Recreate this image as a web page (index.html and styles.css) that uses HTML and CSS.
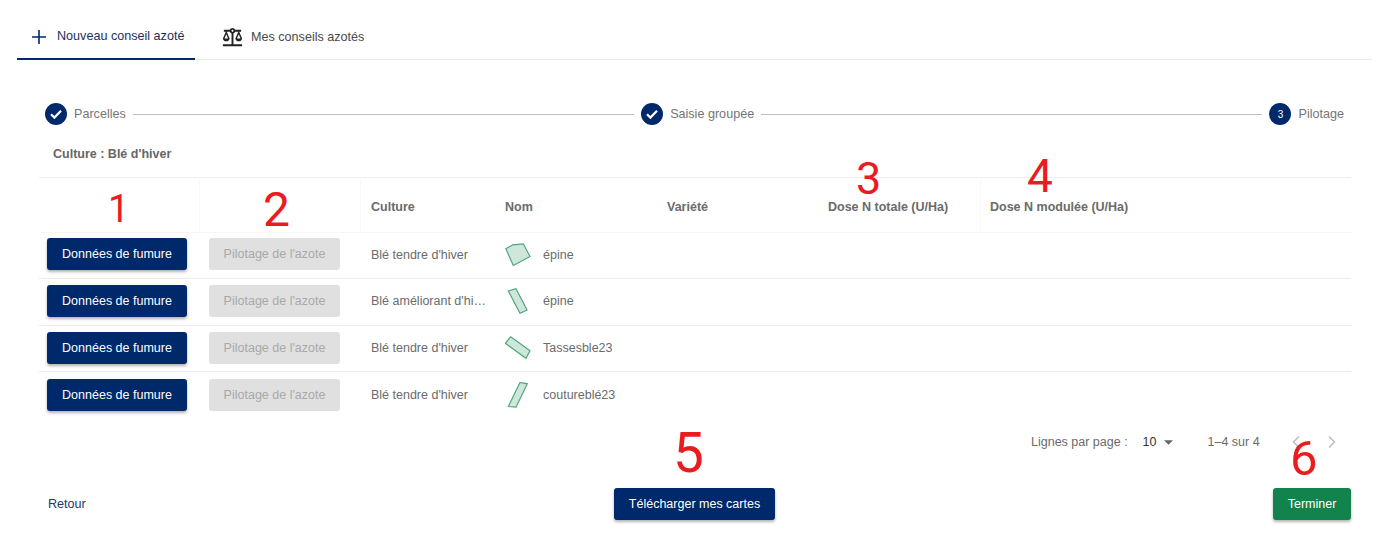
FILE: index.html
```html
<!DOCTYPE html>
<html lang="fr">
<head>
<meta charset="utf-8">
<title>Conseil azoté</title>
<link rel="stylesheet" href="styles.css">
</head>
<body>
<div class="page">
  <nav class="tabs">
    <a class="tab active">
      <svg class="tab-plus" viewBox="0 0 14 14"><path d="M7 0v14M0 7h14"/></svg>
      <span>Nouveau conseil azoté</span>
    </a>
    <a class="tab">
      <svg class="tab-scale" viewBox="0 0 24 24"><path d="M13 7.83c.85-.3 1.53-.98 1.83-1.83H18l-3 7c0 1.66 1.57 3 3.5 3s3.5-1.34 3.5-3l-3-7h2V4h-6.17c-.41-1.17-1.52-2-2.83-2s-2.42.83-2.83 2H3v2h2l-3 7c0 1.66 1.57 3 3.5 3S9 14.66 9 13L6 6h3.17c.3.85.98 1.53 1.83 1.83V19H2v2h20v-2h-9V7.83zM20.37 13h-3.74l1.87-4.36L20.37 13zm-13 0H3.63L5.5 8.64 7.37 13zM12 6c-.55 0-1-.45-1-1s.45-1 1-1 1 .45 1 1-.45 1-1 1z"/></svg>
      <span>Mes conseils azotés</span>
    </a>
  </nav>

  <div class="stepper">
    <div class="step">
      <svg class="step-icon" viewBox="0 0 22 22"><circle cx="11" cy="11" r="11"/><path class="check" d="M6 11.3l3.4 3.3 6.6-6.8"/></svg>
      <span>Parcelles</span>
    </div>
    <div class="connector"></div>
    <div class="step">
      <svg class="step-icon" viewBox="0 0 22 22"><circle cx="11" cy="11" r="11"/><path class="check" d="M6 11.3l3.4 3.3 6.6-6.8"/></svg>
      <span>Saisie groupée</span>
    </div>
    <div class="connector"></div>
    <div class="step">
      <span class="step-num">3</span>
      <span>Pilotage</span>
    </div>
  </div>

  <p class="culture-title">Culture : Blé d'hiver</p>

  <div class="table">
    <div class="row head">
      <div class="cell sep"></div>
      <div class="cell sep"></div>
      <div class="cell">Culture</div>
      <div class="cell">Nom</div>
      <div class="cell">Variété</div>
      <div class="cell sep">Dose N totale (U/Ha)</div>
      <div class="cell">Dose N modulée (U/Ha)</div>
    </div>

    <div class="row">
      <div class="cell btn-cell"><button class="btn primary">Données de fumure</button></div>
      <div class="cell btn-cell"><button class="btn disabled">Pilotage de l'azote</button></div>
      <div class="cell"><span class="clip">Blé tendre d'hiver</span></div>
      <div class="cell name">
        <svg class="parcel" viewBox="0 0 26 26"><polygon points="0.8,6.8 7.7,2.8 18.3,1.8 25,14.5 8.3,23.5"/></svg>
        <span>épine</span>
      </div>
      <div class="cell"></div><div class="cell"></div><div class="cell"></div>
    </div>

    <div class="row">
      <div class="cell btn-cell"><button class="btn primary">Données de fumure</button></div>
      <div class="cell btn-cell"><button class="btn disabled">Pilotage de l'azote</button></div>
      <div class="cell"><span class="clip">Blé améliorant d'hiver</span></div>
      <div class="cell name">
        <svg class="parcel" viewBox="0 0 26 26"><polygon points="3.3,3 11,0.7 22,22 15,25.3"/></svg>
        <span>épine</span>
      </div>
      <div class="cell"></div><div class="cell"></div><div class="cell"></div>
    </div>

    <div class="row">
      <div class="cell btn-cell"><button class="btn primary">Données de fumure</button></div>
      <div class="cell btn-cell"><button class="btn disabled">Pilotage de l'azote</button></div>
      <div class="cell"><span class="clip">Blé tendre d'hiver</span></div>
      <div class="cell name">
        <svg class="parcel" viewBox="0 0 26 26"><polygon points="0.3,8.3 5.7,1.7 25,15.7 21,23.3"/></svg>
        <span>Tassesble23</span>
      </div>
      <div class="cell"></div><div class="cell"></div><div class="cell"></div>
    </div>

    <div class="row last">
      <div class="cell btn-cell"><button class="btn primary">Données de fumure</button></div>
      <div class="cell btn-cell"><button class="btn disabled">Pilotage de l'azote</button></div>
      <div class="cell"><span class="clip">Blé tendre d'hiver</span></div>
      <div class="cell name">
        <svg class="parcel" viewBox="0 0 26 26"><polygon points="3.3,24.5 15,0.5 22.3,1.8 11,25.2"/></svg>
        <span>coutureblé23</span>
      </div>
      <div class="cell"></div><div class="cell"></div><div class="cell"></div>
    </div>
  </div>

  <div class="pagination">
    <span class="per-page">Lignes par page :</span>
    <span class="select">10<svg class="caret" viewBox="0 0 10 5"><path d="M0 0h10L5 5z"/></svg></span>
    <span class="range">1–4 sur 4</span>
    <svg class="chev" viewBox="0 0 10 14"><path d="M8 1.5L2.5 7 8 12.5"/></svg>
    <svg class="chev" viewBox="0 0 10 14"><path d="M2 1.5L7.5 7 2 12.5"/></svg>
  </div>

  <div class="actions">
    <a class="back">Retour</a>
    <button class="btn primary download">Télécharger mes cartes</button>
    <button class="btn success">Terminer</button>
  </div>

  <span class="note n1">1</span>
  <span class="note n2">2</span>
  <span class="note n3">3</span>
  <span class="note n4">4</span>
  <span class="note n5">5</span>
  <span class="note n6">6</span>
</div>
</body>
</html>
```

FILE: styles.css
```css
* { box-sizing: border-box; }

html, body {
  margin: 0;
  background: #fff;
}

body {
  font-family: "Liberation Sans", Arial, sans-serif;
  font-size: 12.5px;
  color: #666;
}

.page {
  position: relative;
  width: 1382px;
  height: 559px;
  overflow: hidden;
  padding-top: 14px;
}

/* Tabs */
.tabs {
  display: flex;
  height: 46px;
  margin: 0 10px 0 17px;
  border-bottom: 1px solid #e9e9e9;
}

.tab {
  display: flex;
  align-items: center;
  height: 46px;
  font-size: 12.6px;
  color: #444;
}

.tab.active {
  width: 178px;
  padding: 0 0 1px 15px;
  gap: 11px;
  color: #1c2f5c;
  border-bottom: 2px solid #00296b;
}

.tab + .tab {
  padding: 0 0 1px 26px;
  gap: 7px;
  color: #4a4a4a;
}

.tab-plus {
  width: 14px;
  height: 14px;
  margin-top: 2px;
  fill: none;
  stroke: #00296b;
  stroke-width: 1.6;
}

.tab-scale {
  width: 23px;
  height: 23px;
  margin-top: 2px;
  fill: #222;
}

/* Stepper */
.stepper {
  display: flex;
  align-items: center;
  height: 24px;
  margin: 42px 38px 0 45px;
}

.step {
  display: flex;
  align-items: center;
  gap: 7px;
  font-size: 12.6px;
  color: #757575;
}

.step-icon {
  width: 22px;
  height: 22px;
  flex: none;
}

.step-icon circle { fill: #00296b; }

.check {
  fill: none;
  stroke: #fff;
  stroke-width: 2.2;
}

.step-num {
  display: flex;
  align-items: center;
  justify-content: center;
  width: 22px;
  height: 22px;
  border-radius: 50%;
  background: #00296b;
  color: #fff;
  font-size: 10px;
}

.connector {
  flex: 1;
  height: 1px;
  margin: 0 7px;
  background: #bdbdbd;
}

.culture-title {
  margin: 21px 0 0 53px;
  height: 15px;
  line-height: 15px;
  font-size: 12.5px;
  font-weight: 700;
  color: #666;
}

/* Table */
.table {
  margin: 15px 31px 0 39px;
  border-top: 1px solid #efefef;
}

.row {
  display: grid;
  grid-template-columns: 160px 161px 135px 162px 161px 162px 1fr;
  height: 46.6px;
  padding-bottom: 1px;
  border-bottom: 1px solid #ececec;
}

.row.last { border-bottom: 0; }

.row.head {
  height: 54.6px;
  padding-bottom: 0;
  border-bottom: 1px solid #f6f6f6;
}

.cell {
  display: flex;
  align-items: center;
  min-width: 0;
  padding: 0 10px;
  font-size: 12.5px;
  color: #6b6b6b;
}

.row > .cell:nth-child(3) {
  padding-left: 11px;
  padding-right: 8px;
}

.row.head > .cell {
  font-weight: 700;
  padding-top: 4px;
}

.head .sep { box-shadow: 1px 0 0 #f8f8f8; }

.btn-cell { padding: 0 0 1px 8px; }
.btn-cell + .btn-cell { padding-left: 10px; }

.clip {
  display: block;
  width: 100%;
  overflow: hidden;
  white-space: nowrap;
  text-overflow: ellipsis;
}

.name { gap: 12px; }

.parcel {
  width: 26px;
  height: 26px;
  flex: none;
  fill: #cfe6db;
  stroke: #4fa77c;
  stroke-width: 1.2;
}

/* Buttons */
.btn {
  display: flex;
  align-items: center;
  justify-content: center;
  height: 32px;
  border: 0;
  border-radius: 3px;
  padding: 0;
  font-family: inherit;
  font-size: 12.5px;
  white-space: nowrap;
}

.btn-cell .btn { width: 140px; }
.btn-cell + .btn-cell .btn { width: 131px; }

.primary {
  background: #00296b;
  color: #fff;
  box-shadow: 0 2px 3px rgba(0, 0, 0, .3);
}

.disabled {
  background: #e0e0e0;
  color: #a9a9a9;
}

.success {
  width: 78px;
  background: #12834c;
  color: #fff;
  box-shadow: 0 2px 3px rgba(0, 0, 0, .3);
}

/* Pagination */
.pagination {
  display: flex;
  align-items: center;
  height: 20px;
  margin: 13.4px 0 0 1031px;
  font-size: 12.5px;
  color: #6b6b6b;
}

.select {
  display: flex;
  align-items: center;
  gap: 7px;
  margin-left: 15px;
  color: #333;
}

.caret {
  width: 9px;
  height: 5px;
  fill: #666;
}

.range { margin-left: 35px; }

.chev {
  width: 10px;
  height: 14px;
  margin-left: 31px;
  fill: none;
  stroke: #bdbdbd;
  stroke-width: 1.5;
}

.chev + .chev { margin-left: 26.5px; }

/* Actions */
.actions {
  display: grid;
  grid-template-columns: 566px 161px 1fr;
  align-items: center;
  margin: 36px 31px 0 48px;
}

.back {
  font-size: 12.6px;
  color: #1f3a68;
}

.success { justify-self: end; }

/* Annotations */
.note {
  position: absolute;
  font-family: "Roboto", "Liberation Sans", sans-serif;
  line-height: .85;
  font-weight: 400;
  color: #ea1c1f;
}

.n1 { left: 108px; top: 193px; font-size: 38px; }
.n2 { left: 263px; top: 190px; font-size: 48px; }
.n3 { left: 856px; top: 160px; font-size: 45px; }
.n4 { left: 1027px; top: 157px; font-size: 46px; }
.n5 { left: 673px; top: 430px; font-size: 55px; }
.n6 { left: 1290px; top: 438px; font-size: 49px; }
```
